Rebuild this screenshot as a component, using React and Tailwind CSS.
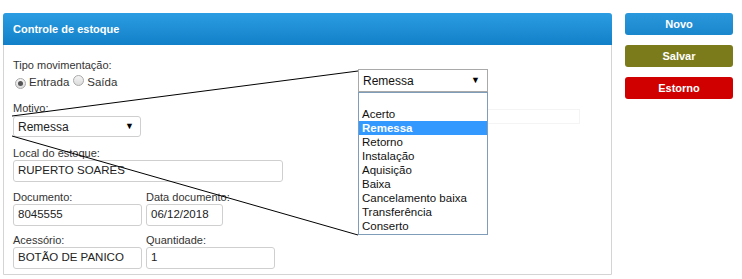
import React from 'react';

const font = { fontFamily: '"Liberation Sans", Arial, sans-serif' };

const Label = ({ children, className = '' }) => (
  <div className={`text-[11px] leading-[14px] text-[#333] ${className}`}>{children}</div>
);

const Field = ({ value, className = '' }) => (
  <div className={`h-[22px] border border-[#cfcfcf] rounded-[3px] bg-white px-[4px] flex items-center text-[11.5px] text-[#222] ${className}`}>
    {value}
  </div>
);

const Radio = ({ checked }) => (
  <span className="inline-flex w-[11px] h-[11px] rounded-full border border-[#a9a9a9] bg-gradient-to-b from-[#f4f4f4] to-[#dcdcdc] items-center justify-center">
    {checked && <span className="w-[5px] h-[5px] rounded-full bg-[#555]" />}
  </span>
);

const options = ['Acerto', 'Remessa', 'Retorno', 'Instalação', 'Aquisição', 'Baixa', 'Cancelamento baixa', 'Transferência', 'Conserto'];

export default function App() {
  return (
    <div className="relative w-[742px] h-[279px] bg-white overflow-hidden" style={font}>
      <div className="flex">
        {/* Panel */}
        <div className="ml-[3px] mt-[13px] w-[609px] h-[262px] border border-[#d4d4d4] rounded-t-[3px]">
          <div className="h-[32px] -m-px mb-0 rounded-t-[3px] bg-gradient-to-b from-[#2b9de2] to-[#1280c8] flex items-center pl-[10px] text-white font-bold text-[11px]">
            Controle de estoque
          </div>
          <div className="pl-[9px] pt-[13px]">
            <Label>Tipo movimentação:</Label>
            <div className="mt-[4px] h-[14px] flex items-center text-[11.5px] text-[#333]">
              <span className="ml-[2px]"><Radio checked /></span>
              <span className="ml-[3px]">Entrada</span>
              <span className="ml-[4px]"><Radio /></span>
              <span className="ml-[3px]">Saída</span>
            </div>
            <Label className="mt-[11px]">Motivo:</Label>
            <div className="mt-[1px] w-[128px] h-[21px] border border-[#cfcfcf] rounded-[3px] flex items-center justify-between pl-[4px] pr-[6px] text-[12px] text-[#222]">
              <span>Remessa</span>
              <span className="text-[9px] text-black">▼</span>
            </div>
            <Label className="mt-[9px]">Local do estoque:</Label>
            <Field value="RUPERTO SOARES" className="w-[270px] h-[21px]" />
            <div className="mt-[8px] flex gap-[4px]">
              <div>
                <Label>Documento:</Label>
                <Field value="8045555" className="w-[129px]" />
              </div>
              <div>
                <Label>Data documento:</Label>
                <Field value="06/12/2018" className="w-[77px]" />
              </div>
            </div>
            <div className="mt-[7px] flex gap-[4px]">
              <div>
                <Label>Acessório:</Label>
                <Field value="BOTÃO DE PANICO" className="w-[129px]" />
              </div>
              <div>
                <Label>Quantidade:</Label>
                <Field value="1" className="w-[129px]" />
              </div>
            </div>
          </div>
        </div>

        {/* Actions */}
        <div className="ml-[13px] mt-[13px] w-[108px] flex flex-col gap-[10px] text-white font-bold text-[11px]">
          <button className="h-[22px] rounded-[3px] bg-gradient-to-b from-[#2a98dc] to-[#1a86cc]">Novo</button>
          <button className="h-[22px] rounded-[3px] bg-[#7b7b1c]">Salvar</button>
          <button className="h-[22px] rounded-[3px] bg-[#d00000]">Estorno</button>
        </div>
      </div>

      {/* Zoom callout lines */}
      <svg className="absolute inset-0 pointer-events-none" width="742" height="279">
        <line x1="12" y1="116" x2="358" y2="71" stroke="#000" strokeWidth="1" />
        <line x1="12" y1="136" x2="358" y2="235" stroke="#000" strokeWidth="1" />
      </svg>

      {/* faint ghost field */}
      <div className="absolute left-[487px] top-[109px] w-[93px] h-[15px] border-t border-b border-r border-[#f4f4f4]" />

      {/* Enlarged dropdown */}
      <div className="absolute left-[358px] top-[69px] w-[130px]">
        <div className="h-[23px] border border-[#a9a9a9] bg-white flex items-center justify-between pl-[4px] pr-[7px] text-[12px] text-[#111]">
          <span>Remessa</span>
          <span className="text-[9px] text-black">▼</span>
        </div>
        <div className="border border-[#7f9db9] bg-white text-[11.5px] leading-[14px] text-[#111] pb-[1px]">
          <div className="h-[14px]" />
          {options.map((o) => (
            <div key={o} className={`pl-[3px] h-[14px] ${o === 'Remessa' ? 'bg-[#3399ff] text-white font-bold' : ''}`}>
              {o}
            </div>
          ))}
        </div>
      </div>
    </div>
  );
}
